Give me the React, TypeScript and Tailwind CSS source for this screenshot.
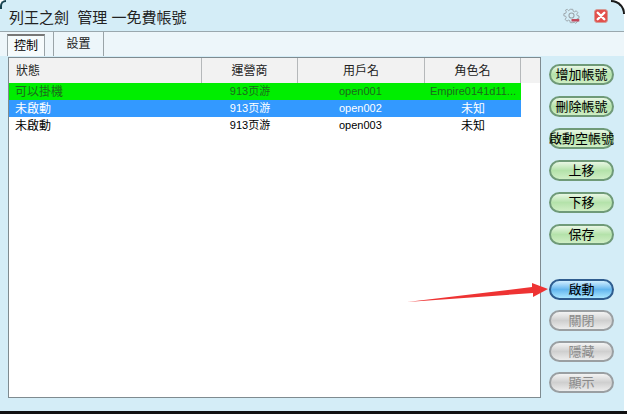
const FONT = "font-['Liberation_Sans','Noto_Sans_CJK_TC',sans-serif]";

const rows = [
  { status: "可以掛機", vendor: "913页游", user: "open001", role: "Empire0141d11...", roleCls: "text-[11px]", cls: "bg-[#00ee00] text-[#1c6b1c]" },
  { status: "未啟動", vendor: "913页游", user: "open002", role: "未知", roleCls: "text-[12px]", cls: "bg-[#3399ff] text-white" },
  { status: "未啟動", vendor: "913页游", user: "open003", role: "未知", roleCls: "text-[12px]", cls: "bg-white text-black" },
];

const greenBtn =
  "border-[#6f9a78] bg-gradient-to-b from-[#e9f7e4] via-[#b4e2aa] to-[#cfeec4] text-black";
const blueBtn =
  "border-[#2f5d8f] bg-gradient-to-b from-[#cfeeff] via-[#63b6ee] to-[#a9e6ff] text-black";
const greyBtn =
  "border-[#9a9fa2] bg-gradient-to-b from-[#f4f4f4] via-[#cfcfcf] to-[#ececec] text-[#8a8a8a]";

const PillButton = ({ label, cls, className = "" }: { label: string; cls: string; className?: string }) => (
  <div
    className={`flex h-[21px] w-[65px] items-center justify-center whitespace-nowrap rounded-full border-2 text-[13px] leading-none ${cls} ${className}`}
  >
    {label}
  </div>
);

const Th = ({ label, className }: { label: string; className: string }) => (
  <div className={`flex items-center border-r border-[#b5b8ba] ${className}`}>{label}</div>
);

export default function App() {
  return (
    <div className={`relative h-[414px] w-[627px] overflow-hidden bg-white ${FONT}`}>
      <div className="flex h-[411px] w-[624px] flex-col overflow-hidden rounded-tl-[8px] rounded-tr-[14px] bg-[#d4edf7]">
        {/* title bar */}
        <div className="flex h-[32px] shrink-0 items-center justify-between border-b border-[#9aa8ae] bg-[#d4edf7] pl-[9px] pr-[16px]">
          <span className="whitespace-pre pt-[4px] text-[15px] leading-none text-[#222]">列王之劍  管理 一免費帳號</span>
          <div className="flex items-center gap-[14px]">
            <svg width="17" height="17" viewBox="0 0 24 24" fill="none" stroke="#9aa3a8" strokeWidth="1.500">
              <path d="M10 2h4l.6 3 2.200 1 2.700-1.600 2.600 2.900-1.800 2.400.7 2.300 3 .7v3.600l-3 .7-1 2.200 1.600 2.600-2.900 2.600-2.400-1.700-2.300.7H10l-.7-3-2.200-1-2.600 1.700L1.800 18l1.700-2.500-.8-2.300-3-.7V9l3-.7 1-2.200L2.200 3.500 5 2l2.200 2.200Z" transform="translate(1.500 1.500) scale(.88)" />
              <circle cx="12" cy="12" r="3.600" />
              <rect x="12" y="17" width="11" height="3.500" fill="#c0485a" stroke="none" />
            </svg>
            <svg width="14" height="14" viewBox="0 0 15 15">
              <rect x=".5" y=".5" width="14" height="14" rx="3" fill="#e2504c" stroke="#d39a94" />
              <path d="M4 4l7 7M11 4l-7 7" stroke="#fff" strokeWidth="2.600" strokeLinecap="round" />
            </svg>
          </div>
        </div>

        {/* tabs */}
        <div className="flex h-[24px] shrink-0 items-end bg-[#edf6fa] pl-[7px]">
          <div className="flex h-[22px] w-[38px] items-center justify-center border border-b-0 border-t-2 border-[#9aa4a8] border-t-[#777] bg-[#f6fbfc] text-[12px] text-black">
            控制
          </div>
          <div className="ml-[8px] flex h-[24px] w-[51px] items-center justify-center border-x border-[#9aa4a8] text-[12px] text-[#222]">
            設置
          </div>
        </div>

        {/* body */}
        <div className="flex min-h-0 flex-1">
          <div className="ml-[8px] mt-[1px] flex h-[341px] w-[533px] flex-col border border-[#7f8b90] bg-white">
            <div className="flex h-[25px] shrink-0 bg-[#f2f2f2] text-[12px] text-[#222]">
              <Th label="狀態" className="w-[193px] pl-[7px]" />
              <Th label="運營商" className="w-[96px] justify-center" />
              <Th label="用戶名" className="w-[127px] justify-center" />
              <Th label="角色名" className="w-[96px] justify-center" />
            </div>
            {rows.map((r) => (
              <div key={r.user} className={`flex h-[17px] w-[512px] items-center leading-none ${r.cls}`}>
                <div className="w-[193px] pl-[6px] text-[12px]">{r.status}</div>
                <div className="w-[96px] text-center text-[11px]">{r.vendor}</div>
                <div className="w-[127px] pl-[41px] text-[11px]">{r.user}</div>
                <div className={`w-[96px] whitespace-nowrap text-center ${r.roleCls}`}>{r.role}</div>
              </div>
            ))}
          </div>

          <div className="ml-[8px] mt-[8px] flex flex-col">
            <PillButton label="增加帳號" cls={greenBtn} />
            <PillButton label="刪除帳號" cls={greenBtn} className="mt-[11px]" />
            <PillButton label="啟動空帳號" cls={greenBtn} className="mt-[11px]" />
            <PillButton label="上移" cls={greenBtn} className="mt-[11px]" />
            <PillButton label="下移" cls={greenBtn} className="mt-[11px]" />
            <PillButton label="保存" cls={greenBtn} className="mt-[11px]" />
            <PillButton label="啟動" cls={blueBtn} className="mt-[34px]" />
            <PillButton label="關閉" cls={greyBtn} className="mt-[10px]" />
            <PillButton label="隱藏" cls={greyBtn} className="mt-[10px]" />
            <PillButton label="顯示" cls={greyBtn} className="mt-[10px]" />
          </div>
        </div>
      </div>

      {/* black window edges from the screenshot crop */}
      <div className="absolute bottom-0 left-0 h-[3px] w-full bg-[#111]" />
      <div className="absolute right-[2px] top-0 h-[14px] w-[14px] rounded-tr-[14px] border-r-2 border-t-2 border-[#1a1a1a]" />
      <div className="absolute left-0 top-0 h-[9px] w-[6px] rounded-tl-[8px] border-l-2 border-t-2 border-[#16424f]" />

      {/* annotation arrow */}
      <svg className="absolute left-[400px] top-[275px]" width="152" height="30" viewBox="0 0 152 30">
        <path d="M7 27L132 12 132 8 148 14 133 22 133 18Z" fill="#ee3333" />
      </svg>
    </div>
  );
}
